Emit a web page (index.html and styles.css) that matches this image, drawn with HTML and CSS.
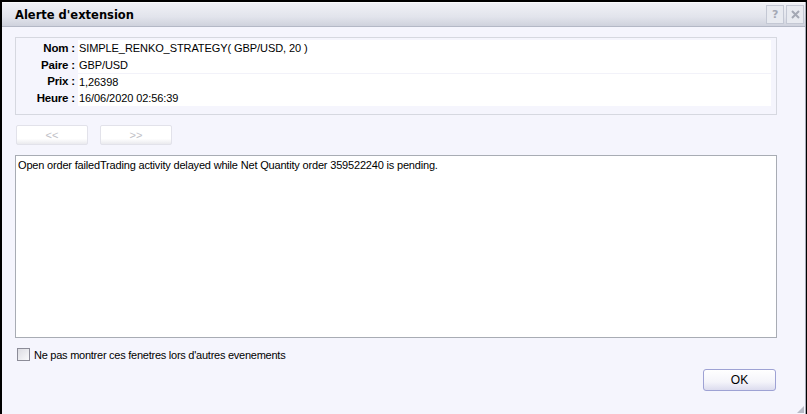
FILE: index.html
```html
<!DOCTYPE html>
<html lang="fr">
<head>
    <meta charset="UTF-8">
    <meta name="viewport" content="width=device-width, initial-scale=1.0">
    <title>Alerte d'extension</title>
    <link rel="stylesheet" href="styles.css">
</head>
<body>
    <div class="window">
        <div class="titlebar">
            <span class="title">Alerte d'extension</span>
            <div class="title-buttons">
                <span class="title-btn">?</span>
                <span class="title-btn">
                    <svg width="9" height="9" viewBox="0 0 9 9">
                        <path d="M1 1 L8 8 M8 1 L1 8" stroke="#a4a8b4" stroke-width="2"/>
                    </svg>
                </span>
            </div>
        </div>

        <div class="content">
            <div class="info">
                <div class="info-row">
                    <span class="label">Nom :</span>
                    <span class="value">SIMPLE_RENKO_STRATEGY( GBP/USD, 20 )</span>
                </div>
                <div class="info-row">
                    <span class="label">Paire :</span>
                    <span class="value">GBP/USD</span>
                </div>
                <div class="info-row split">
                    <span class="label">Prix :</span>
                    <span class="value">1,26398</span>
                </div>
                <div class="info-row">
                    <span class="label">Heure :</span>
                    <span class="value">16/06/2020 02:56:39</span>
                </div>
            </div>

            <div class="nav">
                <button class="nav-btn">&lt;&lt;</button>
                <button class="nav-btn">&gt;&gt;</button>
            </div>

            <div class="message">Open order failedTrading activity delayed while Net Quantity order 359522240 is pending.</div>

            <label class="check">
                <span class="check-box"></span>
                Ne pas montrer ces fenetres lors d'autres evenements
            </label>

            <div class="actions">
                <button class="ok-btn">OK</button>
            </div>
        </div>

        <div class="grip"></div>
    </div>
</body>
</html>
```

FILE: styles.css
```css
body {
    margin: 0;
    padding: 2px 0 0 2px;
    background: #000;
    font-family: "Liberation Sans", Arial, sans-serif;
    font-size: 11px;
    letter-spacing: -0.18px;
    color: #000;
}

.window {
    position: relative;
    width: 804px;
    height: 412px;
    background: #f5f5fd;
    border-right: 1px solid #a8acb8;
    box-sizing: border-box;
}

.titlebar {
    height: 25px;
    display: flex;
    align-items: center;
    justify-content: space-between;
    padding: 0 1px 0 13px;
    background: linear-gradient(#f0f1f6, #e2e4ec 60%, #cfd2dd);
    border-top: 1px solid #fafafc;
    border-bottom: 1px solid #b4b8c6;
    box-sizing: border-box;
}

.title {
    font-family: "DejaVu Sans", Verdana, sans-serif;
    font-weight: bold;
    font-size: 11.5px;
    letter-spacing: 0;
    color: #000;
}

.title-buttons {
    display: flex;
    gap: 2px;
}

.title-btn {
    width: 18px;
    height: 19px;
    display: flex;
    align-items: center;
    justify-content: center;
    border: 1px solid #c4c8d4;
    background: #e8eaf0;
    color: #a4a8b4;
    font-family: "DejaVu Sans", Verdana, sans-serif;
    font-weight: bold;
    font-size: 11px;
    box-sizing: border-box;
}

.content {
    padding: 10px 28px 0 13px;
}

.info {
    border: 1px solid #d6d8e0;
    padding: 2px 5px 8px 0;
}

.info-row {
    display: flex;
    height: 16.5px;
    line-height: 16.5px;
}

.label {
    width: 59px;
    text-align: right;
    font-weight: bold;
    font-size: 11.5px;
    padding-right: 3px;
}

.value {
    flex: 1;
    background: #fff;
    padding-left: 1px;
    letter-spacing: -0.08px;
}

.split .value {
    border-top: 1px solid #f2f2f9;
    box-sizing: border-box;
}

.nav {
    display: flex;
    gap: 12px;
    margin: 10px 0 0 1px;
}

.nav-btn {
    width: 72px;
    height: 20px;
    border: 1px solid #e2e2ea;
    border-radius: 2px;
    background: linear-gradient(#ffffff, #ffffff 70%, #eaeaee);
    color: #c0c0c6;
    font-family: "Liberation Sans", Arial, sans-serif;
    font-size: 11px;
    padding: 0;
}

.message {
    height: 183px;
    margin-top: 10px;
    padding: 3px 2px;
    background: #fff;
    border: 1px solid #a8acb4;
    box-sizing: border-box;
}

.check {
    display: flex;
    align-items: center;
    gap: 4px;
    margin: 10px 0 0 2px;
    letter-spacing: -0.25px;
}

.check-box {
    width: 11px;
    height: 11px;
    border: 1px solid #8c8c98;
    background: linear-gradient(135deg, #dcdce2, #fafafc);
}

.actions {
    display: flex;
    justify-content: flex-end;
    margin-top: 8px;
    padding-right: 1px;
}

.ok-btn {
    width: 73px;
    height: 22px;
    border: 1px solid #9ea2d4;
    border-radius: 3px;
    background: linear-gradient(#ffffff, #f4f4fa 60%, #dcdcee);
    font-family: "Liberation Sans", Arial, sans-serif;
    font-size: 12px;
    color: #000;
    padding: 0;
}

.grip {
    position: absolute;
    right: 1px;
    bottom: 1px;
    width: 7px;
    height: 7px;
    background: radial-gradient(circle, #b8bcc8 0.8px, transparent 1px) 0 0 / 2px 2px;
    clip-path: polygon(100% 0, 100% 100%, 0 100%);
}
```
